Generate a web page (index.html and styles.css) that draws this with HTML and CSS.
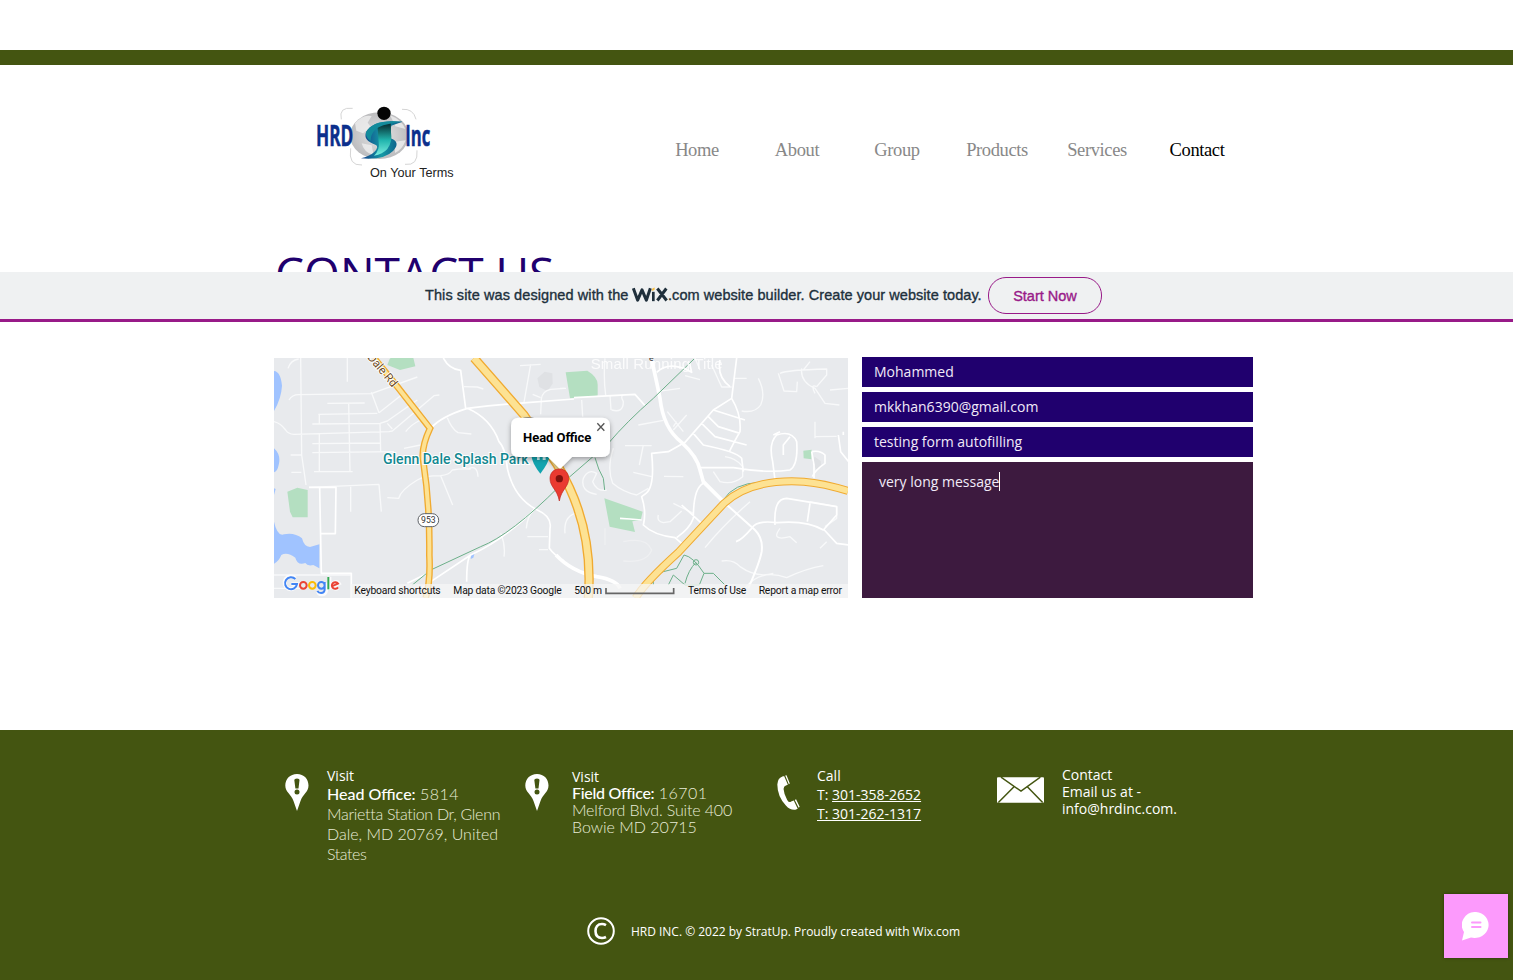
FILE: index.html
```html
<!DOCTYPE html>
<html lang="en">
<head>
<meta charset="utf-8">
<title>Contact | HRD Inc</title>
<link rel="stylesheet" href="styles.css">
</head>
<body>
<div class="top-bar"></div>
<header class="header">
  <svg class="logo" viewBox="0 0 510 285" width="170" height="95">
    <defs>
      <linearGradient id="swoosh" x1="0" y1="0" x2="1" y2="0"><stop offset="0" stop-color="#123a88"/><stop offset=".5" stop-color="#159aa5"/><stop offset="1" stop-color="#0c4f84"/></linearGradient>
      <linearGradient id="figure" x1="0" y1="0" x2="0" y2="1"><stop offset="0" stop-color="#021a20"/><stop offset=".55" stop-color="#22b5ae"/><stop offset="1" stop-color="#7ceee0"/></linearGradient>
      <radialGradient id="globe"><stop offset="0" stop-color="#e6e6e6"/><stop offset="1" stop-color="#bcbcbe"/></radialGradient>
    </defs>
    <path d="M124 73Q115 35 158 40M306 43Q340 40 348 73M152 160Q144 213 186 210M315 208Q355 213 351 166" fill="none" stroke="#d5d5d5" stroke-width="3"/>
    <ellipse cx="238" cy="122" rx="88" ry="70" fill="url(#globe)"/>
    <path d="M165 85q22-28 50-22l-12 20 10 14-24 18-20-8zM270 60q34 14 46 42l-30-8zM185 145l30 6 6 30q-30-9-36-36zM285 140l32-4q-10 28-32 38z" fill="#efefef" opacity=".8"/>
    <path d="M308 80Q218 71 198 112Q189 137 226 149Q239 154 222 172Q208 184 183 190Q252 196 280 167Q303 142 272 130Q268 112 274 92Q290 86 308 80Z" fill="url(#swoosh)"/>
    <path d="M232 88L272 80 273 112Q278 142 262 162Q248 178 222 182Q240 165 236 140Z" fill="url(#figure)"/>
    <path d="M308 80Q218 71 198 112Q196 128 212 138Q212 104 250 91Q275 84 308 80Z" fill="#128b9b"/>
    <circle cx="252" cy="55" r="20" fill="#050505"/>
    <text class="logo-name" x="48" y="153" textLength="112" lengthAdjust="spacingAndGlyphs">HRD</text>
    <text class="logo-name" x="316" y="153" textLength="75" lengthAdjust="spacingAndGlyphs">Inc</text>
    <text class="logo-tag" x="210" y="246" textLength="251" lengthAdjust="spacingAndGlyphs">On Your Terms</text>
  </svg>
  <nav class="nav">
    <a>Home</a><a>About</a><a>Group</a><a>Products</a><a>Services</a><a class="active">Contact</a>
  </nav>
</header>

<main class="main">
  <h1 class="title">CONTACT US</h1>
  <div class="columns">
    <svg class="map" viewBox="0 9 1722 720" width="574" height="240">
      <defs>
        <filter id="shadow" x="-20%" y="-20%" width="140%" height="150%"><feDropShadow dx="0" dy="6" stdDeviation="8" flood-opacity=".35"/></filter>
      </defs>
      <rect y="9" width="1722" height="720" fill="#e8eaed"/>
      <g fill="#a0c3ff">
        <path d="M0 48Q20 50 24 92Q22 130 0 168ZM0 280Q22 300 14 330Q10 350 0 352ZM0 400L5 402 0 420ZM0 500Q10 545 30 538Q62 532 84 550Q90 575 108 576L136 568V640L118 630Q100 634 94 624Q70 632 64 608Q40 590 22 600Q14 620 0 626Z"/>
        <path d="M592 598l10-4-4 14-8 4z"/>
      </g>
      <g fill="#b4dfc1">
        <path d="M347 12L340 30 378 45 424 34 418 9H350ZM40 410L70 398 101 405V487H56L48 470Z"/>
        <path d="M875 52L940 47Q972 66 971 90V122L888 130ZM991 430L1106 470 1100 496 1075 499 1083 531 1007 515ZM1588 287L1613 284 1612 313 1589 310Z"/>
      </g>
      <path d="M790 70L812 50 835 55 836 86 820 108 796 96ZM1614 320L1622 305 1640 318 1642 335 1628 345Z" fill="#dfe1e4"/>
      <g class="minor">
        <path d="M80 9L83 300 96 390M220 9V80M45 135Q55 118 76 119L292 116M292 112L315 173M292 116L430 66M160 145L272 144M133 178L310 175M315 173L395 110M318 205L340 198 430 135M340 205L355 222M345 230L355 228 480 122 496 120M0 200Q20 205 35 225Q42 237 60 238L345 230M115 207L318 205M115 266L320 264M115 293L360 290M136 178V205M136 238V350M224 145L228 352M318 205L320 290M50 300L82 300M42 40Q50 15 74 12M52 352L82 352M120 350H236M105 397L315 388M230 395V470M315 388L322 470"/>
        <path d="M395 230Q412 208 440 195M390 280L440 270M520 188Q532 220 552 233L592 237M570 95L610 96 628 102M770 28L750 142M738 32L800 28M800 178L802 132Q805 108 830 103L872 100M800 128L776 118M500 362L536 450M340 428L374 430Q380 405 430 375Q450 362 500 362Q525 360 535 345Q560 340 590 342"/>
        <path d="M585 340Q610 330 612 365M757 520Q760 485 778 466M760 545L822 545M822 584H795M680 535Q695 570 690 605M0 660H230M0 700H100"/>
      </g>
      <g class="street">
        <path d="M508 9Q525 42 560 46L575 160M470 220Q500 185 580 160Q650 150 730 145L900 132M580 160Q650 190 675 260Q695 280 700 340Q720 430 790 465Q835 485 828 520L826 580Q840 600 870 618M105 397H186L184 536H138M137 397L142 655H232V729M400 685L470 650M440 700L590 600Q690 555 785 460M590 600Q578 610 578 680"/>
      </g>
      <g transform="translate(858 0)">
        <g class="minor">
          <path d="M0 100H18M65 135L68 185M135 10Q130 70 137 120M150 120L153 165M155 165Q190 175 190 140Q180 122 190 120M235 210L310 196M290 110L360 100M375 62L420 74M322 170L370 230M380 180L340 225M340 215L350 200M405 9L420 45M455 30L485 96H515M525 70H560M595 70Q618 115 602 150Q585 175 545 168M655 55L672 108 710 110 712 80M660 55Q680 45 800 42V60L770 95M725 40Q720 80 765 100L795 145 838 150M730 45L750 20M770 95Q750 85 765 115M865 100L810 105M765 200V250M765 245L830 244M195 272H275M250 270L238 330M160 280Q140 340 158 385Q190 412 230 420L265 400M275 365L220 352M370 365L312 364M110 418Q60 410 70 370Q85 340 110 355L98 380Q110 410 140 405M460 350L480 380Q520 390 548 365V335Q530 310 495 305"/>
          <path d="M295 480Q290 500 310 503L330 500 365 468M15 535Q10 480 55 473M340 445L400 475M570 440Q490 510 435 578M485 618Q520 612 540 635Q590 670 640 655M555 700Q600 640 680 668Q740 640 790 632M660 520Q630 560 690 545L710 563M780 580L800 560M795 515L830 490V455L750 440"/>
          <path d="M190 560Q260 545 275 585Q260 625 190 618M135 520V570" stroke="#eff0f2"/>
        </g>
        <g class="street">
          <path d="M42 128L225 118 255 152M290 52Q330 15 395 52L388 20M480 15Q470 65 510 95M530 9L515 130 460 165 375 262 325 290 275 295Q285 395 258 415L245 425Q260 470 250 510Q280 540 345 548L365 565M515 130Q545 180 540 230Q520 265 508 290M460 165L555 195M445 185L475 215 540 235M425 205L465 245 560 270M400 235L430 270Q530 290 545 310L550 350M420 338H520Q620 355 690 345Q715 330 710 260Q695 225 650 240Q625 265 638 320L645 375M640 240L660 230M690 245L670 270V300M430 385Q400 400 400 490Q390 520 350 548M365 450L425 505M757 365Q765 345 795 325V300Q780 285 755 290M835 240L842 290 866 320M850 240V230M645 510Q640 430 680 430L830 455V480L790 525Q740 495 650 503Q590 495 575 520 545 555 528 560M750 445L742 500M793 525L830 565 866 570M180 490L210 492 245 495"/>
          <path d="M755 290L762 330V370"/>
        </g>
        <path d="M275 15Q290 80 300 130Q310 220 365 262Q412 305 420 345L430 380 490 440M-12 600Q35 650 110 665Q170 675 180 700" fill="none" stroke="#fff" stroke-width="11"/>
        <path d="M490 440L585 525Q610 550 605 590Q600 620 565 700" fill="none" stroke="#fff" stroke-width="6"/>
        <path d="M402 12L280 130Q200 200 145 265L-5 395M105 308Q115 345 130 370L134 405M490 435Q520 385 600 382" class="trail"/>
        <path d="M280 690Q275 660 310 650L350 640 372 600Q400 605 432 655L418 690 375 690 340 660 325 690M408 622Q385 645 375 685M432 655H460L495 690M400 622a8 8 0 1 0 16 0a8 8 0 1 0-16 0" class="trail"/>
      </g>
      <path d="M855 395Q710 540 620 575L470 645 415 690" class="trail"/>
      <g class="road-edge">
        <path d="M300 9L370 95 468 220Q440 280 448 320Q468 450 466 600Q470 680 455 729" stroke-width="20"/>
        <path d="M600 9L750 180 850 330Q960 510 943 729" stroke-width="28"/>
        <path d="M1085 729Q1110 685 1215 590L1350 445Q1430 370 1590 380 1650 385 1722 408" stroke-width="24"/>
      </g>
      <g class="road">
        <path d="M300 9L370 95 468 220Q440 280 448 320Q468 450 466 600Q470 680 455 729" stroke-width="12"/>
        <path d="M600 9L750 180 850 330Q960 510 943 729" stroke-width="20"/>
        <path d="M1085 729Q1110 685 1215 590L1350 445Q1430 370 1590 380 1650 385 1722 408" stroke-width="18"/>
      </g>
      <text class="road-label" transform="translate(279 8) rotate(50)" textLength="118">Dale Rd</text>
      <rect x="432" y="476" width="62" height="39" rx="19" fill="#fff" stroke="#5c6065" stroke-width="3"/>
      <text x="463" y="504" class="shield" textLength="44">953</text>
      <text x="1132" y="18" class="shield">e</text>
      <text x="950" y="42" class="ghost" textLength="396">Small Running Title</text>
      <path d="M742 190Q762 183 784 190Z" fill="#333"/>
      <path d="M772 300H828Q824 324 799 356Q774 325 772 300Z" fill="#12a4af"/>
      <path d="M789 306h8v9h-8zM806 306h9v9h-9z" fill="#fff" opacity=".8"/>
      <text x="327" y="328" class="park" textLength="437" lengthAdjust="spacingAndGlyphs">Glenn Dale Splash Park</text>
      <path d="M735 188H984Q1008 188 1008 212V282Q1008 306 984 306H894L858 342 822 306H735Q711 306 711 282V212Q711 188 735 188Z" fill="#fff" filter="url(#shadow)"/>
      <text x="747" y="261" class="bubble" textLength="205">Head Office</text>
      <path d="M970 205L991 227M991 205L970 227" stroke="#555" stroke-width="4"/>
      <path d="M856 342C836 342 828 357 828 371C828 396 850 403 856 438C862 403 884 396 884 371C884 357 876 342 856 342Z" fill="#ea3a30" stroke="#bd261e" stroke-width="2"/>
      <circle cx="856" cy="371" r="11" fill="#80120d"/>
      <rect x="228" y="687" width="1494" height="42" fill="#f5f5f5" opacity=".75"/>
      <g stroke="#fff" stroke-width="12" fill="none" opacity=".8">
        <path d="M64 670A19 19 0 1 0 69 688H52M166 665V704M174 694L194 685A10 10 0 1 0 193 698M156 683V707Q154 719 142 718 135 718 132 710"/>
      </g>
      <g stroke-width="6" fill="none">
        <path d="M64 672A18 18 0 1 0 69 687H52" stroke="#4285f4"/>
        <circle cx="88" cy="691" r="10" stroke="#ea4335"/>
        <circle cx="115" cy="691" r="10" stroke="#fbbc05"/>
        <path d="M152 681V703Q152 714 141 714 134 714 130 708M152 691A10 10 0 1 1 132 691A10 10 0 1 1 152 691" stroke="#4285f4"/>
        <path d="M163 666V703" stroke="#34a853"/>
        <path d="M173 694L192 686A10 10 0 1 0 192 697" stroke="#ea4335"/>
      </g>
      <g class="map-note">
        <text x="241" y="716" textLength="259">Keyboard shortcuts</text>
        <text x="538" y="716" textLength="325">Map data ©2023 Google</text>
        <text x="901" y="716" textLength="83">500 m</text>
        <text x="1242" y="716" textLength="175">Terms of Use</text>
        <text x="1454" y="716" textLength="250">Report a map error</text>
      </g>
      <path d="M996 699V715H1199V699" stroke="#666" stroke-width="5" fill="none"/>
    </svg>
    <form class="form">
      <div class="field">Mohammed</div>
      <div class="field">mkkhan6390@gmail.com</div>
      <div class="field">testing form autofilling</div>
      <div class="message">very long message<span class="caret"></span></div>
    </form>
  </div>
</main>

<footer class="footer">
  <div class="contacts">
    <svg class="pin" viewBox="0 0 24 38" width="24" height="38"><path d="M12 0C5 0 .3 5 .3 11.500C.3 18 6 20 8.500 27L12 37 15.500 27C18 20 23.500 18 23.500 11.500C23.500 5 19 0 12 0Z" fill="#fff"/><path d="M9.300 6Q9.300 4.500 12 4.500T14.500 6L13.500 14.500H10.400Z" fill="#445511"/><circle cx="12" cy="18" r="2.500" fill="#445511"/></svg>
    <div class="block head"><div class="plain">Visit</div><b>Head Office:</b> <span class="wide">5814</span><br><span class="tight">Marietta Station Dr, Glenn</span><br>Dale, MD 20769, United<br><span class="tighter">States</span></div>
    <svg class="pin" viewBox="0 0 24 38" width="24" height="38"><path d="M12 0C5 0 .3 5 .3 11.500C.3 18 6 20 8.500 27L12 37 15.500 27C18 20 23.500 18 23.500 11.500C23.500 5 19 0 12 0Z" fill="#fff"/><path d="M9.300 6Q9.300 4.500 12 4.500T14.500 6L13.500 14.500H10.400Z" fill="#445511"/><circle cx="12" cy="18" r="2.500" fill="#445511"/></svg>
    <div class="block field-office"><div class="plain">Visit</div><b class="tight">Field Office:</b> <span class="wide">16701</span><br><span class="snug">Melford Blvd. Suite 400</span><br>Bowie MD 20715</div>
    <svg class="phone" viewBox="0 0 70 108" width="23" height="36"><path d="M18 3Q2 8 1 28Q1 64 27 92Q40 107 56 105L63 102 51 77 43 80Q37 85 31 75Q21 58 20 42Q20 33 27 31L33 29 22 3Z" fill="#fff"/><path d="M25 1L29 0 39 25 36 27ZM54 75L58 73 69 96 66 99Z" fill="#fff"/></svg>
    <div class="block call">Call<br>T: <u>301-358-2652</u><br><u>T: 301-262-1317</u></div>
    <svg class="mail" viewBox="0 0 141 77" width="47" height="26"><rect width="141" height="77" rx="3" fill="#fff"/><path d="M12 0L72 42 130 0M4 76L51 29M137 76L91 29" stroke="#445511" stroke-width="4.500" fill="none"/></svg>
    <div class="block email">Contact<br>Email us at -<br>info@hrdinc.com.</div>
  </div>
  <div class="copyright">
    <svg viewBox="0 0 28 28" width="28" height="28"><circle cx="14" cy="14" r="12.800" fill="none" stroke="#fff" stroke-width="2"/><path d="M19 8.200Q17 7 15 7C10.500 7 8.500 10 8.500 14S10.500 21 15 21Q17 21 19 20" fill="none" stroke="#fff" stroke-width="2.600"/></svg>
    <span>HRD INC. © 2022 by StratUp. Proudly created with Wix.com</span>
  </div>
</footer>

<aside class="banner">
  <span class="banner-a">This site was designed with the</span>
  <svg class="wix" viewBox="0 0 108 44" width="36" height="15"><path d="M4 3L17 39 30 8 43 39 55 3M76 4L104 40M103 4L76 40" fill="none" stroke="#20303c" stroke-width="9" stroke-linejoin="round"/><path d="M64 14V42" stroke="#20303c" stroke-width="8"/><path d="M59 9Q60 2 68 1V7Q65 11 59 11Z" fill="#fac249"/></svg>
  <span class="banner-b">.com website builder. Create your website today.</span>
  <a class="start">Start Now</a>
</aside>
<button class="chat" aria-label="Chat">
  <svg viewBox="0 0 28 29" width="28" height="29"><path d="M14 0A14 13 0 1 1 9 25.500L0 28.500 2 20A13.500 13 0 0 1 14 0Z" fill="#fff"/><path d="M10 10.500H18.500M10 15H18.500" stroke="#fc9afc" stroke-width="2" stroke-linecap="round"/></svg>
</button>
</body>
</html>
```
FILE: styles.css
```css
* { box-sizing: border-box; }
body { margin: 0; padding-top: 50px; background: #fff; font: 14px "Open Sans", sans-serif; height: 980px; overflow: hidden; }
.top-bar { height: 15px; background: #445511; }
.header { display: flex; height: 170px; padding-left: 300px; }
.logo { margin-top: 30px; flex: none; }
.logo-name { font: 700 86px "Open Sans", sans-serif; fill: #0b2f8c; stroke: #0b2f8c; stroke-width: 1.5; }
.logo-tag { font: 36px "Liberation Sans", sans-serif; fill: #222; }
.nav { display: grid; grid-template-columns: repeat(6, 100px); margin-left: 177px; align-items: center; text-align: center; font: 18.5px "Liberation Serif", serif; letter-spacing: -.38px; color: #888; }
.nav .active { color: #000; }
.main { height: 495px; padding-left: 274px; }
.title { margin: 0; height: 76px; padding-left: 1px; font-size: 46.1px; line-height: 77px; font-weight: 400; color: #20006e; }
.columns { display: flex; gap: 14px; padding-top: 46px; }
.map { margin-top: 1px; flex: none; }
.minor { fill: none; stroke: #f8f9fa; stroke-width: 4; stroke-linejoin: round; }
.street { fill: none; stroke: #fff; stroke-width: 5; stroke-linejoin: round; }
.trail { fill: none; stroke: #6db08a; stroke-width: 3; }
.road-edge { fill: none; stroke: #f0aa30; }
.road { fill: none; stroke: #fde293; }
.road-label { font: 35px Roboto, sans-serif; fill: #6b4a24; stroke: #fff; stroke-width: 5; paint-order: stroke; }
.shield { font: 26px Roboto, sans-serif; fill: #333; text-anchor: middle; }
.ghost { font: 45px "Liberation Sans", sans-serif; fill: #fff; opacity: .85; }
.park { font: 500 43px Roboto, sans-serif; fill: #128891; stroke: #fff; stroke-width: 6; paint-order: stroke; }
.bubble { font: 700 39px Roboto, sans-serif; fill: #000; }
.map-note { font: 31px Roboto, sans-serif; fill: #111; }
.form { width: 391px; display: flex; flex-direction: column; gap: 5px; color: #f1eaf8; }
.field { height: 30px; padding-left: 12px; line-height: 30px; background: #20006e; }
.message { height: 136px; padding: 10px 17px; line-height: 20px; background: #3d1a3f; display: flex; }
.caret { width: 1px; height: 19px; background: #fff; }
.footer { height: 250px; background: #445511; color: #fff; display: flex; flex-direction: column; justify-content: space-between; }
.contacts { display: grid; grid-template-columns: 42px 198px 47px 205px 40px 180px 65px 150px; padding-left: 285px; align-items: start; }
.pin { margin-top: 44px; }
.phone { margin-top: 45px; }
.mail { margin-top: 47px; }
.block { white-space: nowrap; }
.plain { font: 14px "Open Sans", sans-serif; letter-spacing: 0; }
.head { margin-top: 36px; font: 300 16px/20px Lato, sans-serif; color: #e8ecd8; }
.head .plain { line-height: 19px; margin-bottom: -1px; color: #fff; }
.field-office { margin-top: 38px; font: 300 16px/17px Lato, sans-serif; color: #e8ecd8; }
.field-office .plain { line-height: 17px; margin-bottom: -1px; color: #fff; }
.block b { font-weight: 500; color: #fff; }
.wide { letter-spacing: .5px; }
.snug { letter-spacing: -.15px; }
.tight { letter-spacing: -.3px; }
.tighter { letter-spacing: -.45px; }
.call { margin-top: 36px; line-height: 19px; }
.email { margin-top: 36px; line-height: 17px; }
.copyright { display: flex; align-items: center; gap: 16px; padding-left: 587px; margin-bottom: 35px; font-size: 12px; letter-spacing: -.015px; }
.banner { position: fixed; top: 272px; left: 0; right: 0; height: 50px; padding: 0 0 1px 425px; display: flex; align-items: center; background: #eff1f2; border-bottom: 3px solid #981a88; font: 14.5px "Liberation Sans", sans-serif; color: #20303c; -webkit-text-stroke: .35px; white-space: nowrap; }
.banner-a { width: 207px; letter-spacing: .09px; }
.wix { margin-bottom: 2px; }
.banner-b { width: 320px; letter-spacing: .06px; }
.start { width: 114px; height: 37px; border: 1px solid #981a88; border-radius: 18px; color: #981a88; line-height: 36px; text-align: center; }
.chat { position: fixed; left: 1444px; top: 894px; width: 64px; height: 64px; padding: 0; border: 0; background: #fc9afc; box-shadow: 0 0 3px rgba(0,0,0,.4); display: flex; align-items: center; justify-content: center; }
```
